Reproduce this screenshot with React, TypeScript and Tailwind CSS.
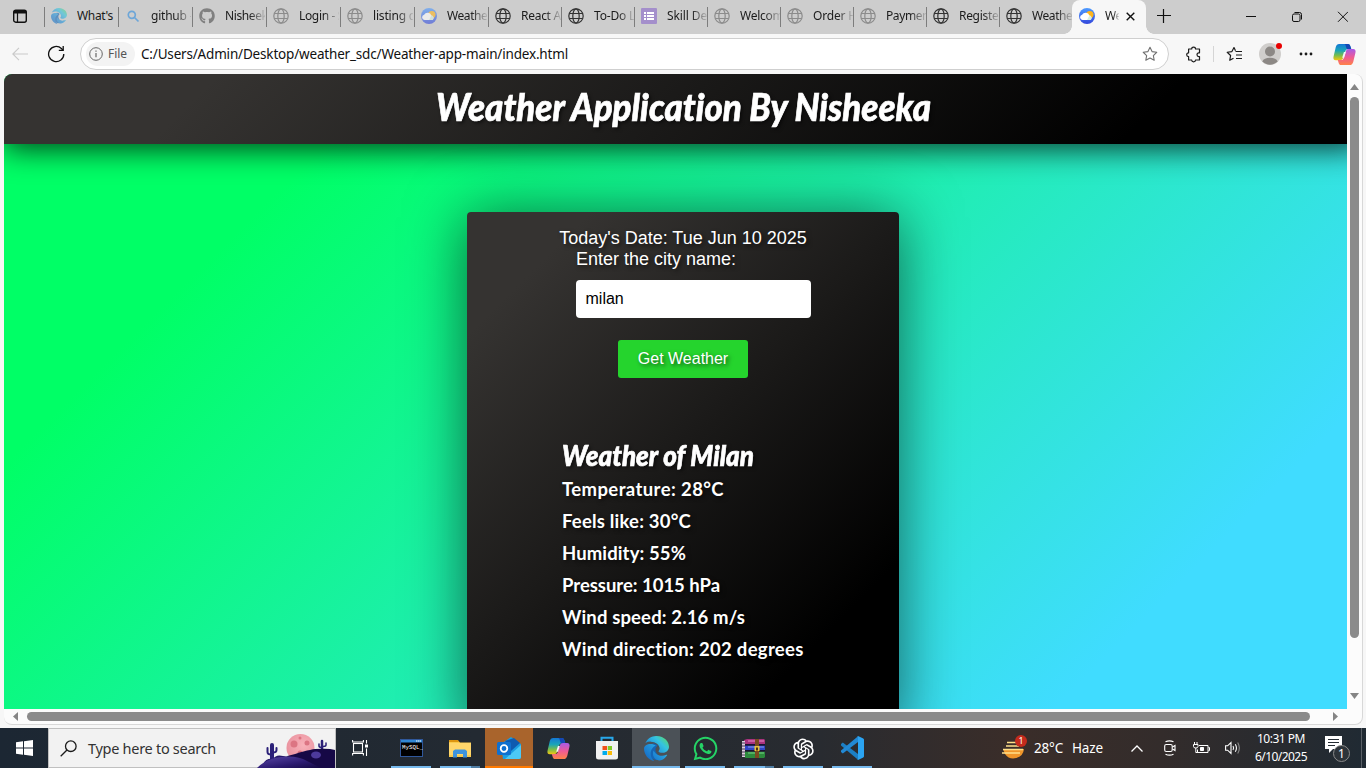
import React, { useLayoutEffect, useRef, useState } from "react";
import { FaEdge, FaGithub, FaWhatsapp } from "react-icons/fa6";
import { AiOutlineOpenAI } from "react-icons/ai";

/** Single line of text spread over an exact width, by tracking or by horizontal scale. */
function Fit({ w, scale = false, className = "", children }: { w: number; scale?: boolean; className?: string; children: string }) {
  const ref = useRef<HTMLSpanElement>(null);
  const [style, setStyle] = useState<React.CSSProperties>({});
  useLayoutEffect(() => {
    const natural = ref.current!.getBoundingClientRect().width;
    setStyle(scale ? { transform: `scaleX(${w / natural})` } : { letterSpacing: (w - natural) / children.length });
  }, [w, scale, children]);
  return (
    <span className="block" style={{ width: w }}>
      <span ref={ref} className={`inline-block origin-left whitespace-nowrap align-top ${className}`} style={style}>
        {children}
      </span>
    </span>
  );
}

const Globe = ({ dark }: { dark?: boolean }) => (
  <svg width="16" height="16" viewBox="0 0 16 16" fill="none" stroke={dark ? "#333" : "#8c8c8c"} strokeWidth="1.2">
    <circle cx="8" cy="8" r="7.2" />
    <ellipse cx="8" cy="8" rx="3.2" ry="7.2" />
    <path d="M1.4 5.5h13.2M1.4 10.5h13.2" />
  </svg>
);

const CloudIcon = () => (
  <svg width="16" height="16" viewBox="0 0 16 16">
    <defs>
      <linearGradient id="sky" x1="0" y1="0" x2="0" y2="1">
        <stop offset="0" stopColor="#4d9bff" />
        <stop offset="1" stopColor="#3448dc" />
      </linearGradient>
    </defs>
    <circle cx="8" cy="8" r="8" fill="url(#sky)" />
    <circle cx="10.8" cy="6.6" r="3.7" fill="#ffb51b" />
    <path d="M3.5 12a2.7 2.7 0 0 1-.4-5.3A4 4 0 0 1 10.4 7.500 2.400 2.400 0 0 1 11.300 12z" fill="#fff" />
    <path d="M10.400 7.500a2.400 2.400 0 0 1 .9 4.500H8z" fill="#d7efe0" />
  </svg>
);

const EdgeIcon = ({ size }: { size: number }) => (
  <>
    <svg width="0" height="0" className="absolute">
      <defs>
        <linearGradient id="edgeg" x1="0" y1="1" x2="1" y2="0">
          <stop offset="0" stopColor="#1360bd" />
          <stop offset=".45" stopColor="#2397dd" />
          <stop offset=".7" stopColor="#35c3e0" />
          <stop offset="1" stopColor="#62e04d" />
        </linearGradient>
      </defs>
    </svg>
    <div className="relative">
      <svg className="absolute left-0 top-0" width={size} height={size} viewBox="0 0 24 24">
        <path d="M3 10q6-5 10-1-4 4 0 9 4 3 8 0-4 5-9 5Q5 22 3 16z" fill="#1565b5" />
      </svg>
      <FaEdge size={size} fill="url(#edgeg)" className="relative" />
    </div>
  </>
);

const Copilot = ({ size }: { size: number }) => (
  <svg width={size} height={size} viewBox="0 0 24 24">
    <defs>
      <linearGradient id="cpa" x1="0" y1="0" x2="0" y2="1">
        <stop offset="0" stopColor="#1477d6" />
        <stop offset=".4" stopColor="#1aa5b8" />
        <stop offset=".7" stopColor="#78bd4c" />
        <stop offset="1" stopColor="#f6c60f" />
      </linearGradient>
      <linearGradient id="cpb" x1="0" y1="0" x2="0" y2="1">
        <stop offset="0" stopColor="#a85be8" />
        <stop offset=".5" stopColor="#ee5a96" />
        <stop offset="1" stopColor="#ff8248" />
      </linearGradient>
    </defs>
    <path d="M6.500 1h9c1.800 0 2.300 1.200 2.800 3l.8 2.500h-3.500c-1.600 0-2.400.8-2.900 2.500l-2 6.500c-.6 1.800-1.500 2.500-3.300 2.500H3c-2.300 0-3-1.800-2.400-4L2.900 4.200C3.600 2 4.500 1 6.500 1z" fill="url(#cpa)" />
    <path d="M12 1h3.500c1.800 0 2.300 1.200 2.800 3l.8 2.500h-3.500c-1.300 0-1.800-1-2-2.200C13.300 2.500 13 1.500 12 1z" fill="#1447b5" />
    <path d="M17.500 23h-9c-1.800 0-2.300-1.200-2.800-3L5 17.800h3.500c1.600 0 2.400-.8 2.900-2.500l2-6.500c.6-1.800 1.500-2.500 3.300-2.500H21c2.300 0 3 1.800 2.400 4l-2.300 9.500c-.7 2.200-1.600 3.200-3.600 3.200z" fill="url(#cpb)" />
    <path d="M11.400 9.500h2l-1.800 6h-2z" fill="#f7f7f7" />
  </svg>
);

const TabSearch = () => (
  <svg width="16" height="16" viewBox="0 0 16 16" fill="none" stroke="#6da6d8" strokeWidth="1.700">
    <circle cx="6.800" cy="6.800" r="3.500" />
    <path d="M9.500 9.500l4 4" />
  </svg>
);

const Form = () => (
  <svg width="16" height="16" viewBox="0 0 16 16">
    <rect width="16" height="16" rx="1" fill="#a48fcb" />
    <path d="M3 4h2v2H3zM6 4h7v2H6zM3 7h2v2H3zM6 7h7v2H6zM3 10h2v2H3zM6 10h7v2H6z" fill="#fff" />
  </svg>
);

const tabs: { t: string; w: number; icon: React.ReactNode; last?: boolean }[] = [
  { t: "What's", w: 36, icon: <div className="opacity-60"><EdgeIcon size={16} /></div> },
  { t: "github - ", w: 42, icon: <TabSearch /> },
  { t: "Nisheeka", w: 49, icon: <FaGithub size={16} color="#808080" /> },
  { t: "Login - S", w: 45, icon: <Globe /> },
  { t: "listing d", w: 43, icon: <Globe /> },
  { t: "Weather", w: 45, icon: <div className="opacity-60"><CloudIcon /></div> },
  { t: "React Ap", w: 47, icon: <Globe dark /> },
  { t: "To-Do Li", w: 44, icon: <Globe dark /> },
  { t: "Skill Dev", w: 46, icon: <Form /> },
  { t: "Welcome", w: 50, icon: <Globe /> },
  { t: "Order Hi", w: 47, icon: <Globe /> },
  { t: "Payment", w: 47, icon: <Globe /> },
  { t: "Register", w: 44, icon: <Globe dark /> },
  { t: "Weather", w: 45, icon: <Globe dark />, last: true },
];

const FADE = "[mask-image:linear-gradient(to_right,#000_60%,transparent_105%)]";

function TabStrip() {
  return (
    <div className="flex h-[34px] shrink-0 bg-[#cdcdcd] text-[12px] leading-4 text-[#1b1b1b]">
      <div className="w-[44px] pl-[12px] pt-[9px]">
        <svg width="16" height="15" viewBox="0 0 16 15" fill="none" stroke="#111">
          <rect x="1.700" y="1.200" width="12.600" height="12" rx="2" strokeWidth="1.400" />
          <path d="M1.700 3.200h12.600" strokeWidth="2.600" />
          <path d="M5.500 4v9" strokeWidth="1.200" />
        </svg>
      </div>
      {tabs.map((tab, i) => (
        <div key={i} className={`flex shrink-0 pt-[8px] ${i < 6 ? "w-[74px]" : "w-[73px]"}`}>
          <div className="-mt-px h-5 w-px bg-[#7d7d7d]" />
          <div className="ml-[6px] w-4 shrink-0">{tab.icon}</div>
          <div className={`ml-[10px] w-[40px] overflow-hidden ${tab.t === "What's" ? "" : FADE}`}>
            <Fit w={tab.w}>{tab.t}</Fit>
          </div>
        </div>
      ))}
      <div className="relative flex w-[74px] shrink-0 rounded-t-[8px] bg-[#f7f7f7] pl-[7px] pt-[8px]">
        <div className="absolute -left-2 bottom-0 h-2 w-2 bg-[radial-gradient(circle_at_0_0,transparent_7.500px,#f7f7f7_8px)]" />
        <div className="absolute -right-2 bottom-0 h-2 w-2 bg-[radial-gradient(circle_at_100%_0,transparent_7.500px,#f7f7f7_8px)]" />
        <CloudIcon />
        <div className={`ml-[10px] w-[14px] overflow-hidden ${FADE}`}>
          <Fit w={45}>Weather</Fit>
        </div>
        <svg className="ml-[7px] mt-[4px]" width="9" height="9" viewBox="0 0 9 9" stroke="#111" strokeWidth="1.400">
          <path d="M.7.7l7.600 7.600M8.300.7L.7 8.300" />
        </svg>
      </div>
      <svg className="ml-[11px] mt-[9px]" width="14" height="14" viewBox="0 0 14 14" stroke="#111" strokeWidth="1.200">
        <path d="M6.500 0v14M0 6.500h14" />
      </svg>
      <svg className="ml-auto mr-[18px] mt-[11px]" width="102" height="12" viewBox="0 0 102 12" fill="none" stroke="#111">
        <path d="M0 5.500h10" />
        <rect x="46.500" y="3" width="7.500" height="7.500" rx="1.500" />
        <path d="M48.500 1.500h5q2 0 2 2v5" />
        <path d="M92 .8l10 10M102 .8l-10 10" />
      </svg>
    </div>
  );
}

const STAR = "M8 1.300l2.050 4.300 4.700.65-3.400 3.300.85 4.700L8 12l-4.200 2.250.85-4.700-3.400-3.300 4.700-.65z";

function Toolbar() {
  return (
    <div className="flex h-[40px] shrink-0 items-center bg-[#f7f7f7]">
      <svg className="ml-[12px]" width="16" height="14" viewBox="0 0 16 14" fill="none" stroke="#c9c9c9" strokeWidth="1.100">
        <path d="M16 7H.8M7 .8L.8 7 7 13.200" />
      </svg>
      <svg className="ml-[19px]" width="18" height="18" viewBox="0 0 18 18" fill="none" stroke="#111" strokeWidth="1.300">
        <path d="M16.800 9a7.600 7.600 0 1 1-2.400-5.500l1.700 1.700" />
        <path d="M16.200 1v4.400h-4.400" />
      </svg>
      <div className="ml-[15px] flex h-[32px] w-[1089px] items-center rounded-full border border-[#cfcfcf] bg-white pl-[5px] pr-[10px]">
        <div className="flex h-6 w-[49px] items-center rounded-full bg-[#f3f3f3] pl-[3px]">
          <svg width="14" height="14" viewBox="0 0 14 14" fill="none" stroke="#666">
            <circle cx="7" cy="7" r="6.300" />
            <path d="M7 6v4.300M7 3.500v1.300" strokeWidth="1.200" />
          </svg>
          <div className="ml-[5px] text-[12px] leading-4 text-[#555]">
            <Fit w={19}>File</Fit>
          </div>
        </div>
        <div className="ml-[6px] text-[13.500px] leading-5 text-[#111]">
          <Fit w={427}>C:/Users/Admin/Desktop/weather_sdc/Weather-app-main/index.html</Fit>
        </div>
        <svg className="ml-auto" width="16" height="16" viewBox="0 0 16 16" fill="none" stroke="#707070" strokeWidth="1.100" strokeLinejoin="round">
          <path d={STAR} />
        </svg>
      </div>
      <svg className="ml-[16px]" width="17" height="17" viewBox="0 0 17 17" fill="none" stroke="#1b1b1b" strokeWidth="1.200" strokeLinejoin="round">
        <path d="M4.500 3h2.200a1.900 1.900 0 0 1 3.800 0h4v3.800h-.6a1.900 1.900 0 0 0 0 3.800h.6v3.400h-4a1.900 1.900 0 0 1-3.800 0H3.600v-3.400a1.900 1.900 0 0 1 0-3.800V3z" />
      </svg>
      <div className="ml-[11px] h-4 w-px bg-[#d5d5d5]" />
      <svg className="ml-[12px]" width="17" height="16" viewBox="0 0 17 16" fill="none" stroke="#1b1b1b" strokeWidth="1.200" strokeLinejoin="round">
        <path d="M9.500 4.700L8 1.500 5.900 5.600 1.200 6.250l3.400 3.300-.85 4.700L7.500 12.200M9.500 5.500H16M10 9h6M10 12.500h6" />
      </svg>
      <div className="relative ml-[16px] h-[22px] w-[22px]">
        <svg width="22" height="22" viewBox="0 0 22 22">
          <circle cx="11" cy="11" r="11" fill="#d0cecc" />
          <circle cx="11" cy="8.500" r="5" fill="#8c8885" />
          <path d="M3.300 18.500a8 5 0 0 1 15.400 0A11 11 0 0 1 3.300 18.500z" fill="#8c8885" />
        </svg>
        <div className="absolute -right-px top-0 h-[6px] w-[6px] rounded-full bg-[#e80000]" />
      </div>
      <svg className="ml-[18px]" width="14" height="4" viewBox="0 0 14 4" fill="#1b1b1b">
        <circle cx="2" cy="2" r="1.400" /><circle cx="7" cy="2" r="1.400" /><circle cx="12" cy="2" r="1.400" />
      </svg>
      <div className="ml-[20px]"><Copilot size={23} /></div>
    </div>
  );
}

const readings: [string, number][] = [
  ["Temperature: 28°C", 162],
  ["Feels like: 30°C", 129],
  ["Humidity: 55%", 124],
  ["Pressure: 1015 hPa", 158],
  ["Wind speed: 2.16 m/s", 183],
  ["Wind direction: 202 degrees", 242],
];

const SHADOW = "[text-shadow:2px_2px_4px_rgba(0,0,0,0.600)]";
const HEADING = "font-['Lato'] font-black italic [font-variant-ligatures:none] [-webkit-text-stroke:0.700px_#fff]";

function Page() {
  return (
    <div className="h-[635px] w-[1343px] overflow-hidden rounded-tl-[8px] bg-[#353331]">
      <div className={`h-[696px] w-[1358px] bg-[linear-gradient(135deg,#00ff66_19%,#40dcff_82%)] text-white ${SHADOW}`}>
        <div className="flex h-[70px] justify-center bg-[linear-gradient(135deg,#353331_15%,#000_83%)] pt-[8px] shadow-[0_5px_30px_rgba(0,0,0,0.750)]">
          <Fit w={495} scale className={`text-[38px] leading-[48px] ${HEADING}`}>Weather Application By Nisheeka</Fit>
        </div>
        <div className="ml-[463px] mt-[68px] h-[520px] w-[432px] rounded-[4px] bg-[linear-gradient(135deg,#353331_13%,#000_82%)] pt-[16px] font-['Liberation_Sans',sans-serif] shadow-[0_5px_60px_rgba(0,0,0,0.600)]">
          <p className="text-center text-[18px] leading-[21px]">Today's Date: Tue Jun 10 2025</p>
          <p className="pl-[109px] text-[18px] leading-[21px]">Enter the city name:</p>
          <div className="ml-[109px] mt-[10px] h-[38px] w-[235px] rounded-[4px] bg-white pl-[9.500px] text-[16px] leading-[38px] text-black [text-shadow:none]">milan</div>
          <button className={`mx-auto mt-[22px] block h-[38px] w-[130px] rounded-[3px] bg-[#25d42d] text-[16px] leading-[38px] ${SHADOW}`}>Get Weather</button>
          <div className="pl-[95px] pt-[60px]">
            <Fit w={192} scale className={`text-[27.500px] leading-[35px] ${HEADING}`}>Weather of Milan</Fit>
            {readings.map(([t, w]) => (
              <div key={t} className="h-8 font-['Lato'] text-[18.500px] font-bold leading-8">
                <Fit w={w}>{t}</Fit>
              </div>
            ))}
          </div>
        </div>
      </div>
    </div>
  );
}

function Viewport() {
  return (
    <div className="h-[654px] shrink-0 bg-[#f7f7f7] pl-[4px]">
      <div className="flex h-[651px] w-[1359px] flex-col rounded-[8px] border-b border-r border-[#d8d8d8] bg-[#fcfcfc]">
        <div className="flex">
          <Page />
          <div className="flex h-[635px] w-[15px] flex-col items-center pt-[10px]">
            <svg width="9" height="6" viewBox="0 0 9 6"><path d="M4.500 0L9 6H0z" fill="#858585" /></svg>
            <div className="mt-[7px] h-[541px] w-[9px] rounded-full bg-[#8b8b8b]" />
            <svg className="mt-auto mb-[10px]" width="9" height="6" viewBox="0 0 9 6"><path d="M4.500 6L9 0H0z" fill="#858585" /></svg>
          </div>
        </div>
        <div className="flex h-[15px] items-center pl-[9px]">
          <svg width="5" height="9" viewBox="0 0 5 9"><path d="M0 4.500L5 0v9z" fill="#858585" /></svg>
          <div className="ml-[9px] h-[9px] w-[1283px] rounded-full bg-[#8b8b8b]" />
          <svg className="ml-[23px]" width="5" height="9" viewBox="0 0 5 9"><path d="M5 4.500L0 0v9z" fill="#858585" /></svg>
        </div>
      </div>
    </div>
  );
}

const Scene = () => (
  <svg width="80" height="39" viewBox="0 0 80 39">
    <defs>
      <linearGradient id="hill" x1="0" y1="0" x2="1" y2="1">
        <stop offset="0" stopColor="#5a48a8" />
        <stop offset=".6" stopColor="#2b1a70" />
        <stop offset="1" stopColor="#140842" />
      </linearGradient>
      <radialGradient id="moon" cx=".6" cy=".4" r=".7">
        <stop offset="0" stopColor="#f8b1b9" />
        <stop offset="1" stopColor="#e88f9c" />
      </radialGradient>
    </defs>
    <circle cx="45.500" cy="19" r="14" fill="url(#moon)" />
    <g fill="#dc7583">
      <circle cx="39" cy="15" r="3.500" /><circle cx="52" cy="14" r="2.500" /><circle cx="45" cy="9" r="1.500" /><circle cx="45" cy="24" r="2.500" />
    </g>
    <g fill="none" stroke="#2b2078" strokeLinecap="round">
      <path d="M17 16v18" strokeWidth="4" />
      <path d="M12.500 19v4q0 2.500 4 2.500M21.500 19v2q0 2.500-4 2.500" strokeWidth="2" />
      <path d="M67 12v14" strokeWidth="2.500" />
      <path d="M64 15v2q0 1.500 3 1.500M71 14v2q0 1.500-3 1.500" strokeWidth="1.500" />
    </g>
    <path d="M8 35q3-6 10-5 3-5 10-3 5 0 4 5l-6 7H8z" fill="#241667" />
    <path d="M30 28Q52 21 60 20q14-1 20 1v18H30z" fill="#160846" />
    <path d="M2 39q10-10 24-11 16-2 26 4 8 4 14 7z" fill="url(#hill)" />
    <ellipse cx="61" cy="26" rx="5" ry="3.500" fill="#4d3a9c" />
  </svg>
);

const MySql = () => (
  <svg width="23" height="18" viewBox="0 0 23 18">
    <rect x=".5" y=".5" width="22" height="17" fill="#000" stroke="#30589b" />
    <path d="M1 1h21v2.500H1z" fill="#2f87d5" />
    <path d="M16 2h1.500M18 2h1.500M20 2h1" stroke="#fff" />
    <text x="2" y="10" fill="#fff" fontSize="5.800" fontFamily="Liberation Mono">MySQL_</text>
  </svg>
);

const Folder = () => (
  <svg width="22" height="19" viewBox="0 0 22 19">
    <path d="M0 1.500h9l2 2h11V18H0z" fill="#f9ca4c" />
    <path d="M0 1h9l1 2H0z" fill="#dd9511" />
    <path d="M0 4h22v12H0z" fill="#ffd66b" />
    <path d="M4 18.500V12l2-1.500h10l2 1.500v6.500h-4V15H8v3.500z" fill="#3f94dc" />
  </svg>
);

const Outlook = () => (
  <svg width="24" height="22" viewBox="0 0 24 22">
    <path d="M4 7l10-7 10 7v13q0 2-2 2H6z" fill="#1b9de2" />
    <path d="M8 4l9-3 6 5-9 8z" fill="#0f5bb0" />
    <path d="M24 8v12q0 2-2 2H8z" fill="#4cc9f5" />
    <rect y="5" width="14" height="13" rx="1.500" fill="#1070cf" />
    <circle cx="7" cy="11.500" r="3.300" fill="none" stroke="#fff" strokeWidth="1.800" />
  </svg>
);

const Store = () => (
  <svg width="24" height="24" viewBox="0 0 24 24">
    <path d="M6.500 6V1.800h11V6" fill="none" stroke="#28a8ea" strokeWidth="2" />
    <path d="M1 5h22v16q0 2.500-2.500 2.500h-17Q1 23.500 1 21z" fill="#f1f1f1" />
    <path d="M7.500 10H12v4H7.500z" fill="#f1511b" />
    <path d="M12.700 10H17v4h-4.300z" fill="#80cc28" />
    <path d="M7.500 15H12v4H7.500z" fill="#00adef" />
    <path d="M12.700 15H17v4h-4.300z" fill="#fbbc09" />
  </svg>
);

const WinRar = () => (
  <svg width="24" height="19" viewBox="0 0 24 19">
    <path d="M2 1l3-1h17l1 1v5H2z" fill="#a8327d" />
    <path d="M2 6.500h21V12H2z" fill="#3045c5" />
    <path d="M2 12.500h21V18l-1 1H4l-2-1z" fill="#2c8a3c" />
    <path d="M2 5h21v1.500H2zM2 11h21v1.500H2z" fill="#1a1233" />
    <path d="M0 2h3v16H0z" fill="#dcd0dc" />
    <path d="M0 4h3M0 7h3M0 10h3M0 13h3M0 16h3" stroke="#453454" />
    <path d="M6 2h16" stroke="#ea8ac8" />
    <path d="M6 8h16" stroke="#8aa0f5" />
    <path d="M6 14h16" stroke="#79d485" />
    <path d="M13 0h4v19h-4z" fill="#7a4a20" />
    <path d="M12.500 7h5v5h-5z" fill="#e8c33a" />
    <path d="M14 8.500h2v3h-2z" fill="#4b2f18" />
  </svg>
);

const VsCode = () => (
  <svg width="24" height="24" viewBox="0 0 24 24">
    <path d="M1 8l1.800-1.600L18 18v5.800L1 9.400z" fill="#1c7fc4" />
    <path d="M1 16l1.800 1.600L18 6V.2L1 14.600z" fill="#2289d4" />
    <path d="M17 .2l1-.2 5.300 2.500.7 1v17l-.7 1L18 24l-1-.2q1 .2 1-1.300v-21Q18 0 17 .2z" fill="#2ba4f2" />
  </svg>
);

const apps: { el: React.ReactNode; bg?: string; bar?: string }[] = [
  { el: <MySql />, bar: "mx-1 bg-[#76b9ed]" },
  { el: <Folder />, bar: "mx-1 bg-[linear-gradient(to_right,#76b9ed_31px,#4f7da3_31px)]" },
  { el: <Outlook />, bg: "bg-[#a9642c]", bar: "bg-[#ff7a00]" },
  { el: <Copilot size={23} /> },
  { el: <Store /> },
  { el: <EdgeIcon size={25} />, bg: "bg-[#4b5157]", bar: "bg-[#76b9ed]" },
  { el: <FaWhatsapp size={27} color="#25d366" />, bar: "mx-1 bg-[#76b9ed]" },
  { el: <WinRar />, bar: "mx-1 bg-[linear-gradient(to_right,#76b9ed_31px,#4f7da3_31px)]" },
  { el: <AiOutlineOpenAI size={27} color="#fff" />, bar: "mx-1 bg-[#76b9ed]" },
  { el: <VsCode />, bar: "mx-1 bg-[#76b9ed]" },
];

function Taskbar() {
  return (
    <div className="flex h-[40px] shrink-0 items-center bg-[linear-gradient(to_right,#1c2733,#232a32_35%,#282b30_60%,#3a2d29_74%,#332c2b_85%,#202a33)] text-white">
      <div className="flex w-12 justify-center">
        <svg width="17" height="16" viewBox="0 0 17 16" fill="#fff">
          <path d="M0 2.300L7 1.300v6.300H0zM8 1.200L17 0v7.600H8zM0 8.500h7v6.300l-7-1zM8 8.500h9V16l-9-1.200z" />
        </svg>
      </div>
      <div className="flex h-[40px] w-[288px] items-center border border-[#c0c0c0] bg-[#f2f2f2]">
        <svg className="ml-[11px]" width="17" height="17" viewBox="0 0 17 17" fill="none" stroke="#1b1b1b" strokeWidth="1.300">
          <circle cx="10.800" cy="6.200" r="5.300" />
          <path d="M7 10L.7 16.300" />
        </svg>
        <div className="ml-[11px] text-[14.500px] leading-5 text-[#333]"><Fit w={128}>Type here to search</Fit></div>
        <div className="ml-auto"><Scene /></div>
      </div>
      <svg className="ml-[16px]" width="16" height="16" viewBox="0 0 16 16" fill="none" stroke="#fff" strokeWidth="1.100">
        <rect x="1.500" y="3.500" width="9" height="8.500" />
        <path d="M.6 0v2h10.800V0M.6 15.500v-2h10.800v2M14.500 0v3.500M14.500 8.500V16" />
        <path d="M13 4.500h3v3h-3z" fill="#fff" stroke="none" />
      </svg>
      <div className="ml-[19px] flex gap-px">
        {apps.map((a, i) => (
          <div key={i} className={`flex h-[40px] w-12 flex-col ${a.bg ?? ""}`}>
            <div className="flex h-[38px] items-center justify-center pt-[2px]">{a.el}</div>
            {a.bar && <div className={`h-[2px] ${a.bar}`} />}
          </div>
        ))}
      </div>
      <div className="relative ml-[126px] h-6 w-6">
        <svg width="24" height="24" viewBox="0 0 24 24">
          <path d="M1 13h21a10.500 10.500 0 0 1-19 5z" fill="#f0962a" />
          <path d="M5 6.500h9M4 10h13M1 13.500h20M0 17h18" stroke="#ffe08a" strokeWidth="1.600" />
        </svg>
        <div className="absolute -right-px -top-px h-3 w-3 rounded-full bg-[#c42b1c] text-center text-[9px] leading-3">1</div>
      </div>
      <div className="ml-[8px] flex gap-[9px] text-[13.500px] leading-5"><Fit w={29}>28°C</Fit><Fit w={31}>Haze</Fit></div>
      <svg className="ml-[28px]" width="12" height="7" viewBox="0 0 12 7" fill="none" stroke="#fff" strokeWidth="1.300"><path d="M.5 6.500L6 1l5.500 5.500" /></svg>
      <svg className="ml-[21px]" width="12" height="16" viewBox="0 0 12 16" fill="none" stroke="#fff" strokeWidth="1.100">
        <rect x=".7" y="4.500" width="7.500" height="7" rx="1.500" />
        <path d="M8.500 7l2.500-1.500v5L8.500 9M1.500 1.800q4-1.800 8 0M1.500 14.200q4 1.800 8 0" />
      </svg>
      <svg className="ml-[17px]" width="17" height="13" viewBox="0 0 17 13" fill="none" stroke="#fff" strokeWidth="1">
        <path d="M6 3.500h9v7H4.500V7.500M15.500 5.500h1v3h-1M1.500 0v2.500M4 0v2.500M.5 2.500H5v2Q5 6 2.800 6 .5 6 .5 4.500zM2.800 6v4.500h2" />
        <path d="M7.500 5.500h3v3h-3z" fill="#fff" />
      </svg>
      <svg className="ml-[15px]" width="17" height="14" viewBox="0 0 17 14" fill="none" stroke="#fff" strokeWidth="1.100">
        <path d="M.6 4.800h2L6 1.500v11L2.600 9.200h-2zM8 5q1.200 2 0 4M10.300 3.200q2.300 3.800 0 7.600" />
        <path d="M12.700 1.500q3.300 5.500 0 11" stroke="#888" />
      </svg>
      <div className="ml-[12px] flex w-[54px] flex-col items-center text-[12px] leading-[18px]">
        <Fit w={48}>10:31 PM</Fit>
        <Fit w={52}>6/10/2025</Fit>
      </div>
      <div className="relative ml-[17px] h-6 w-[25px]">
        <svg width="17" height="17" viewBox="0 0 17 17"><path d="M0 0h17v13H8l-4 4v-4H0z" fill="#fff" /><path d="M3 3.500h11M3 6.500h11M3 9.500h7" stroke="#252c33" /></svg>
        <div className="absolute bottom-[-2px] right-0 h-[17px] w-[17px] rounded-full border border-[#8b8b8b] bg-[#2d3339] text-center text-[12px] leading-[15px]">1</div>
      </div>
      <div className="ml-[11px] h-[40px] w-px bg-[#5a6067]" />
    </div>
  );
}

export default function App() {
  return (
    <div className="flex h-[768px] w-[1366px] flex-col overflow-hidden font-['Noto_Sans',sans-serif]">
      <TabStrip />
      <Toolbar />
      <Viewport />
      <Taskbar />
    </div>
  );
}
